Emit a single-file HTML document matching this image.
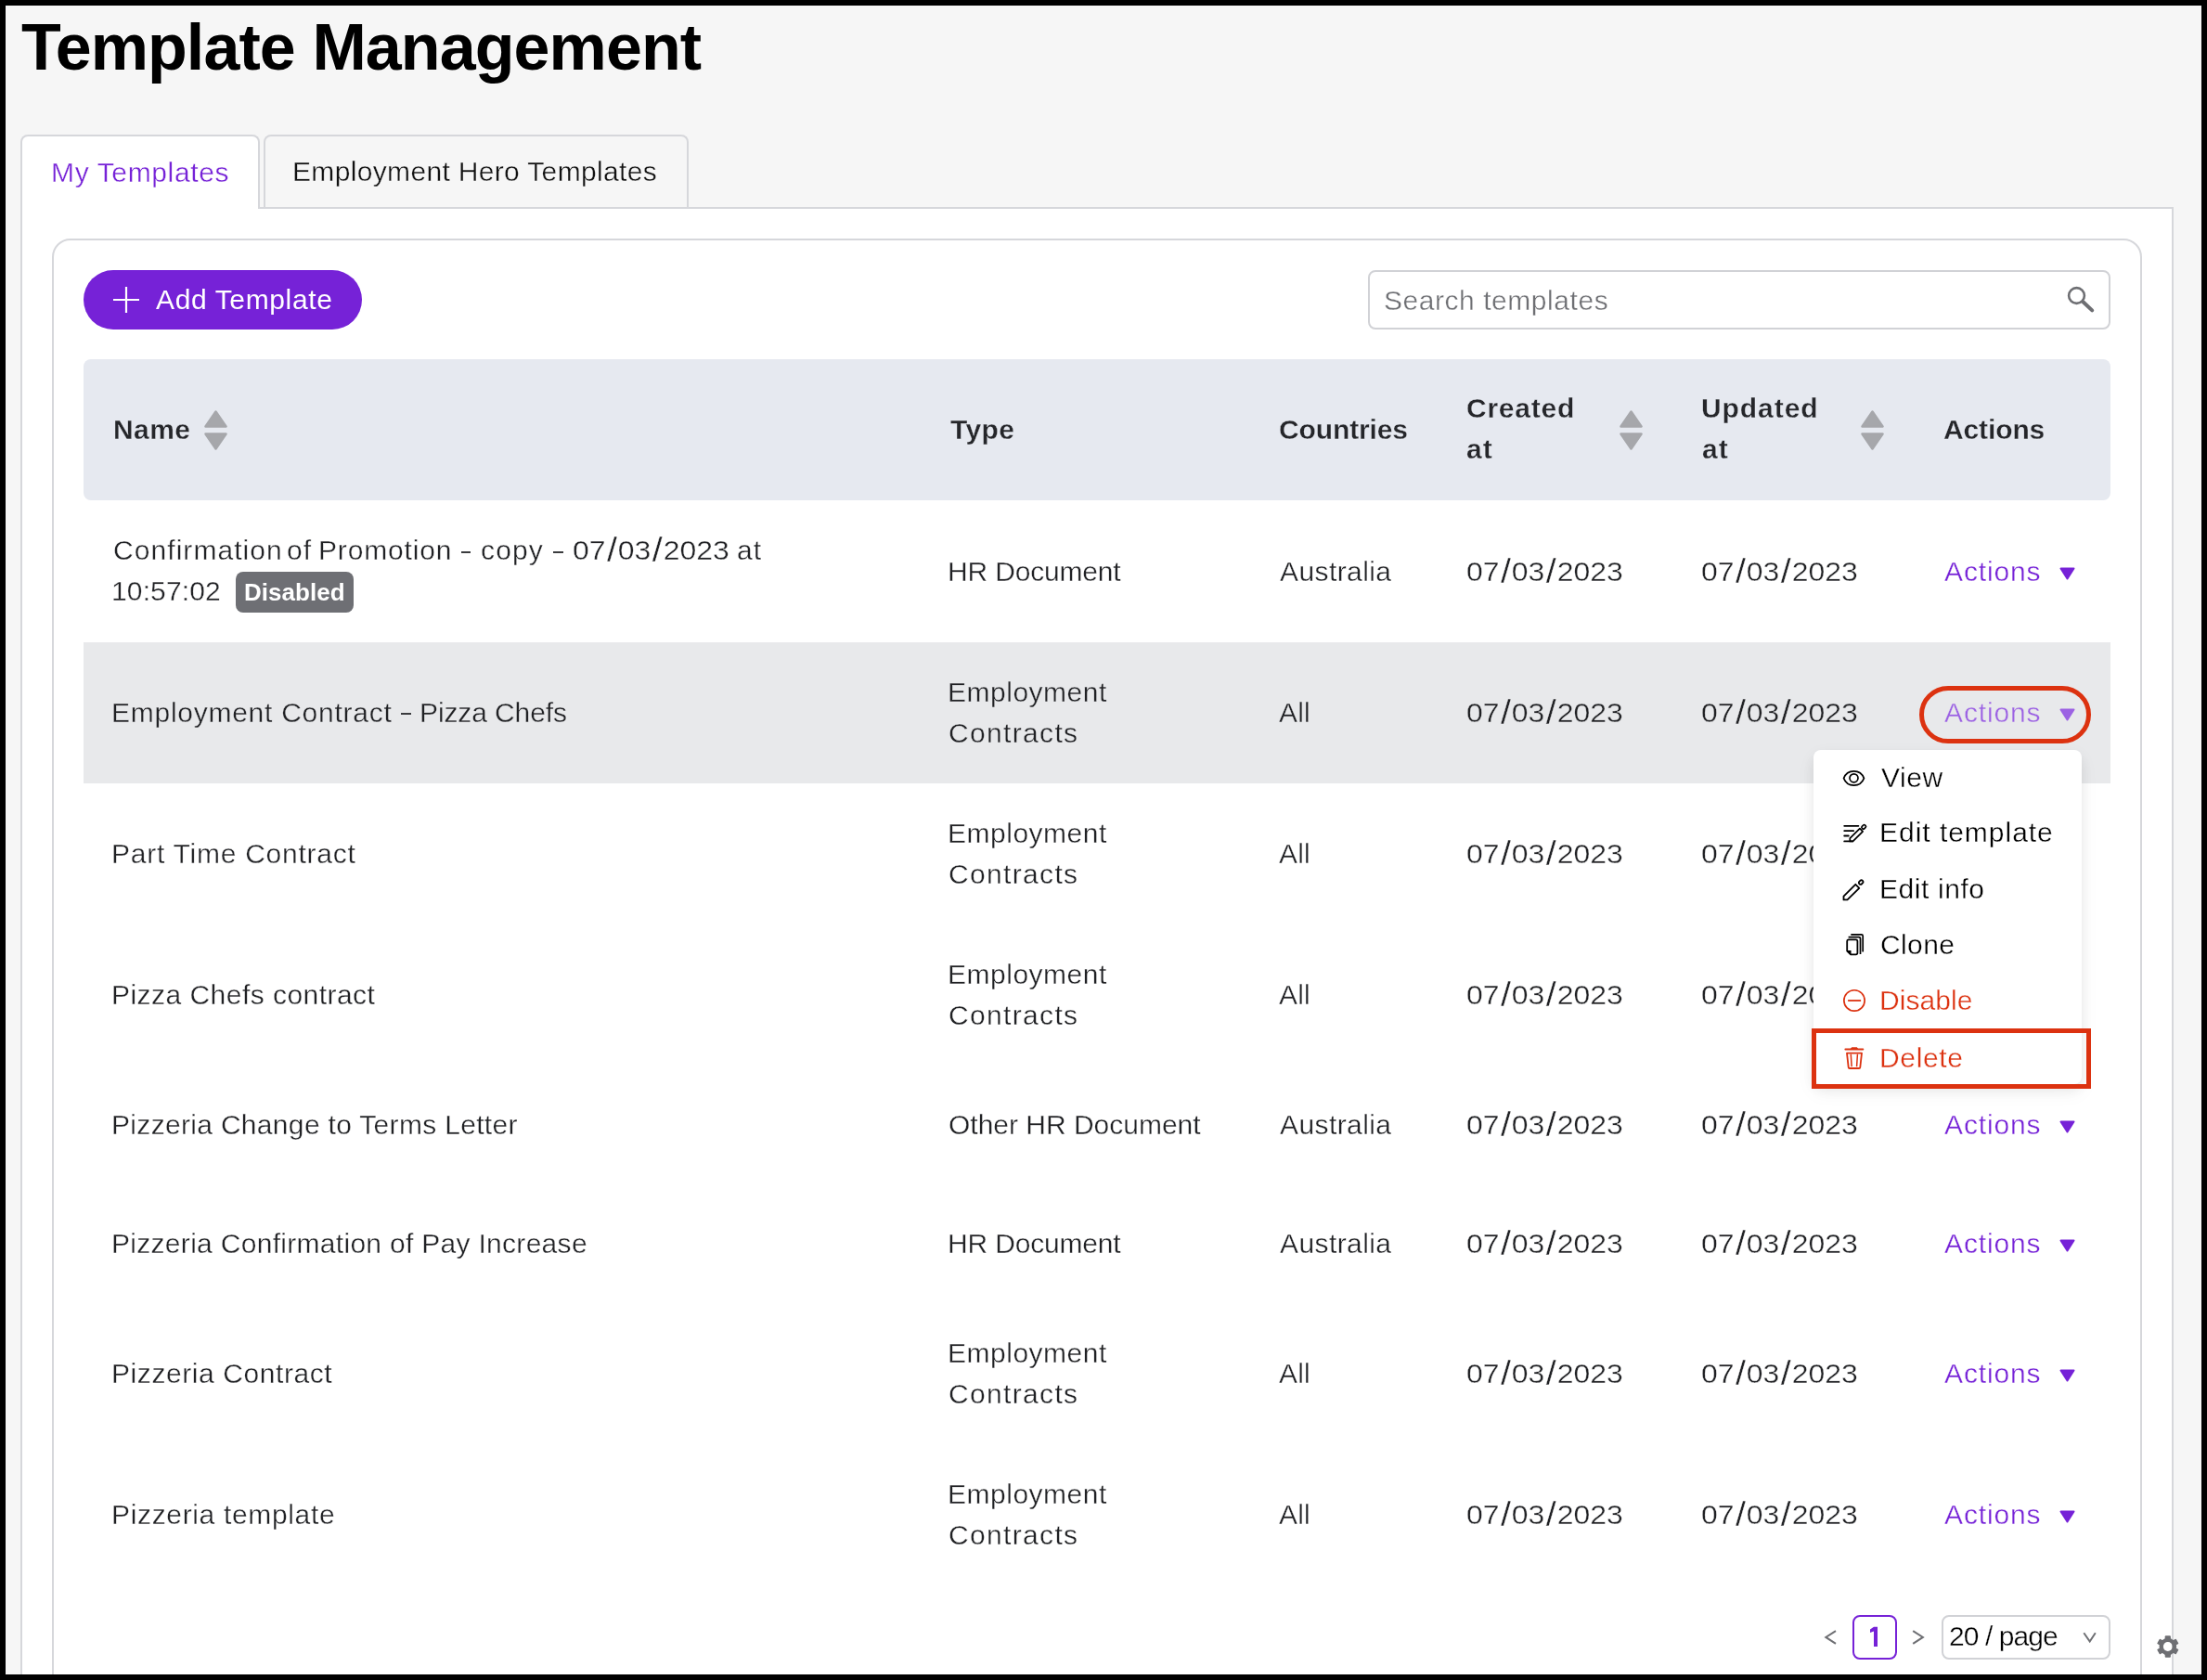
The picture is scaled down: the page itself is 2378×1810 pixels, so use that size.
<!DOCTYPE html>
<html><head><meta charset="utf-8"><style>
*{box-sizing:border-box;margin:0;padding:0}
html,body{width:2378px;height:1810px;overflow:hidden;background:#000;font-family:"Liberation Sans", sans-serif}
.abs{position:absolute}
.t{position:absolute;white-space:nowrap;will-change:transform}
.sl{font-size:37px;margin:0 0.9px 0 1.3px;vertical-align:-2px}
.dt{display:inline-block;transform:scaleX(1.065);transform-origin:0 0}
</style></head><body>

<div class="abs" style="left:6px;top:6px;width:2366px;height:1798px;overflow:hidden"><div class="abs" style="left:-6px;top:-6px;width:2378px;height:1810px">
<div class="abs" style="left:6px;top:6px;width:2366px;height:1798px;background:#f6f6f6"></div>
<div id="t0" class="t" style="left:23.00px;top:0.21px;font-size:70px;line-height:102.667px;font-weight:700;color:#000;letter-spacing:-0.906px">Template Management</div>
<div class="abs" style="left:22px;top:223px;width:2320px;height:1700px;background:#fff;border:2px solid #d6d7db"></div>
<div class="abs" style="left:22px;top:145px;width:258px;height:80px;background:#fff;border:2px solid #d6d7db;border-bottom:none;border-radius:8px 8px 0 0"></div>
<div class="abs" style="left:284px;top:145px;width:458px;height:78px;background:#f6f6f6;border:2px solid #d6d7db;border-bottom:none;border-radius:8px 8px 0 0"></div>
<div id="t1" class="t" style="left:54.60px;top:163.91px;font-size:30px;line-height:44.0px;font-weight:400;color:#7622d7;letter-spacing:0.636px;-webkit-text-stroke:0.35px #fff">My Templates</div>
<div id="t2" class="t" style="left:315.40px;top:162.80px;font-size:30px;line-height:44.0px;font-weight:400;color:#111;letter-spacing:0.337px;-webkit-text-stroke:0.35px #f6f6f6">Employment Hero Templates</div>
<div class="abs" style="left:56px;top:257px;width:2252px;height:1700px;background:#fff;border:2px solid #d6d7db;border-radius:20px"></div>
<div class="abs" style="left:90px;top:291px;width:300px;height:64px;background:#7622d7;border-radius:32px"></div>
<svg class="abs" style="left:122px;top:309px" width="28" height="28" viewBox="0 0 28 28"><path d="M14 0V28M0 14H28" stroke="#fff" stroke-width="2.2"/></svg>
<div id="t3" class="t" style="left:167.60px;top:301.41px;font-size:30px;line-height:44.0px;font-weight:400;color:#fff;letter-spacing:0.636px">Add Template</div>
<div class="abs" style="left:1474px;top:291px;width:800px;height:64px;background:#fff;border:2px solid #d1d2d6;border-radius:8px"></div>
<div id="t4" class="t" style="left:1491.00px;top:301.61px;font-size:30px;line-height:44.0px;font-weight:400;color:#6e6f73;letter-spacing:0.547px;-webkit-text-stroke:0.35px #fff">Search templates</div>
<svg class="abs" style="left:2224px;top:306px" width="36" height="34" viewBox="0 0 36 34"><circle cx="13.5" cy="12.5" r="8.4" fill="none" stroke="#6e6f73" stroke-width="2.6"/><path d="M20.5 19.3L30.2 28.4" stroke="#6e6f73" stroke-width="4" stroke-linecap="round"/></svg>
<div class="abs" style="left:90px;top:387px;width:2184px;height:152px;background:#e6e9f0;border-radius:8px"></div>
<div id="t5" class="t" style="left:121.80px;top:441.00px;font-size:30px;line-height:44.0px;font-weight:700;color:#25262a;letter-spacing:0.400px;-webkit-text-stroke:0.3px #e6e9f0">Name</div>
<div id="t6" class="t" style="left:1023.60px;top:440.81px;font-size:30px;line-height:44.0px;font-weight:700;color:#25262a;letter-spacing:0.400px;-webkit-text-stroke:0.3px #e6e9f0">Type</div>
<div id="t7" class="t" style="left:1377.80px;top:441.00px;font-size:30px;line-height:44.0px;font-weight:700;color:#25262a;letter-spacing:-0.125px;-webkit-text-stroke:0.3px #e6e9f0">Countries</div>
<div id="t8" class="t" style="left:1580.00px;top:418.21px;font-size:30px;line-height:44.0px;font-weight:700;color:#25262a;letter-spacing:0.767px;-webkit-text-stroke:0.3px #e6e9f0">Created</div>
<div id="t9" class="t" style="left:1580.00px;top:462.41px;font-size:30px;line-height:44.0px;font-weight:700;color:#25262a;letter-spacing:1.000px;-webkit-text-stroke:0.3px #e6e9f0">at</div>
<div id="t10" class="t" style="left:1832.60px;top:418.21px;font-size:30px;line-height:44.0px;font-weight:700;color:#25262a;letter-spacing:0.933px;-webkit-text-stroke:0.3px #e6e9f0">Updated</div>
<div id="t11" class="t" style="left:1833.60px;top:462.41px;font-size:30px;line-height:44.0px;font-weight:700;color:#25262a;letter-spacing:1.000px;-webkit-text-stroke:0.3px #e6e9f0">at</div>
<div id="t12" class="t" style="left:2093.80px;top:440.81px;font-size:30px;line-height:44.0px;font-weight:700;color:#25262a;letter-spacing:-0.117px;-webkit-text-stroke:0.3px #e6e9f0">Actions</div>
<svg class="abs" style="left:219.5px;top:441.5px" width="25" height="43" viewBox="0 0 25 43"><path d="M12.5 1.5L23.5 17.5H1.5Z" fill="#a6a7ab" stroke="#a6a7ab" stroke-width="2.5" stroke-linejoin="round"/><path d="M12.5 41.5L23.5 25.5H1.5Z" fill="#a6a7ab" stroke="#a6a7ab" stroke-width="2.5" stroke-linejoin="round"/></svg>
<svg class="abs" style="left:1745px;top:441.5px" width="25" height="43" viewBox="0 0 25 43"><path d="M12.5 1.5L23.5 17.5H1.5Z" fill="#a6a7ab" stroke="#a6a7ab" stroke-width="2.5" stroke-linejoin="round"/><path d="M12.5 41.5L23.5 25.5H1.5Z" fill="#a6a7ab" stroke="#a6a7ab" stroke-width="2.5" stroke-linejoin="round"/></svg>
<svg class="abs" style="left:2005px;top:441.5px" width="25" height="43" viewBox="0 0 25 43"><path d="M12.5 1.5L23.5 17.5H1.5Z" fill="#a6a7ab" stroke="#a6a7ab" stroke-width="2.5" stroke-linejoin="round"/><path d="M12.5 41.5L23.5 25.5H1.5Z" fill="#a6a7ab" stroke="#a6a7ab" stroke-width="2.5" stroke-linejoin="round"/></svg>
<div class="abs" style="left:90px;top:692px;width:2184px;height:152px;background:#e8e9eb"></div>
<div id="t13" class="t" style="left:121.80px;top:571.11px;font-size:30px;line-height:44.0px;font-weight:400;color:#202124;letter-spacing:1.064px;-webkit-text-stroke:0.35px #fff">Confirmation</div>
<div id="t14" class="t" style="left:309.20px;top:571.11px;font-size:30px;line-height:44.0px;font-weight:400;color:#202124;letter-spacing:1.000px;-webkit-text-stroke:0.35px #fff">of</div>
<div id="t15" class="t" style="left:343.40px;top:571.11px;font-size:30px;line-height:44.0px;font-weight:400;color:#202124;letter-spacing:0.825px;-webkit-text-stroke:0.35px #fff">Promotion</div>
<div id="t16" class="t" style="left:517.80px;top:571.11px;font-size:30px;line-height:44.0px;font-weight:400;color:#202124;letter-spacing:1.133px;-webkit-text-stroke:0.35px #fff">copy</div>
<div id="t17" class="t" style="left:616.80px;top:571.11px;font-size:30px;line-height:44.0px;font-weight:400;color:#202124;letter-spacing:0.000px;-webkit-text-stroke:0.35px #fff"><span class="dt">07<span class="sl">/</span>03<span class="sl">/</span>2023</span></div>
<div id="t18" class="t" style="left:793.80px;top:571.11px;font-size:30px;line-height:44.0px;font-weight:400;color:#202124;letter-spacing:1.000px;-webkit-text-stroke:0.35px #fff">at</div>
<div class="abs" style="left:496.5px;top:593.5px;width:10.3px;height:2px;background:#3a3b3e"></div>
<div class="abs" style="left:595.5px;top:593.5px;width:11.0px;height:2px;background:#3a3b3e"></div>
<div id="t19" class="t" style="left:120.20px;top:614.71px;font-size:30px;line-height:44.0px;font-weight:400;color:#202124;letter-spacing:0.129px;-webkit-text-stroke:0.35px #fff">10:57:02</div>
<div class="abs" style="left:254px;top:616px;width:127px;height:44px;background:#6e6f74;border-radius:8px"></div>
<div id="t20" class="t" style="left:263.00px;top:619.02px;font-size:26px;line-height:38.133px;font-weight:700;color:#fff;letter-spacing:0.029px">Disabled</div>
<div id="t21" class="t" style="left:1020.80px;top:593.81px;font-size:30px;line-height:44.0px;font-weight:400;color:#202124;letter-spacing:-0.170px;-webkit-text-stroke:0.35px #fff">HR Document</div>
<div id="t22" class="t" style="left:1378.60px;top:593.81px;font-size:30px;line-height:44.0px;font-weight:400;color:#202124;letter-spacing:0.412px;-webkit-text-stroke:0.35px #fff">Australia</div>
<div id="t23" class="t" style="left:1579.60px;top:593.81px;font-size:30px;line-height:44.0px;font-weight:400;color:#202124;letter-spacing:0.000px;-webkit-text-stroke:0.35px #fff"><span class="dt">07<span class="sl">/</span>03<span class="sl">/</span>2023</span></div>
<div id="t24" class="t" style="left:1833.20px;top:593.81px;font-size:30px;line-height:44.0px;font-weight:400;color:#202124;letter-spacing:0.000px;-webkit-text-stroke:0.35px #fff"><span class="dt">07<span class="sl">/</span>03<span class="sl">/</span>2023</span></div>
<div id="t25" class="t" style="left:2094.80px;top:593.81px;font-size:30px;line-height:44.0px;font-weight:400;color:#7622d7;letter-spacing:0.867px;-webkit-text-stroke:0.35px #fff">Actions</div>
<svg class="abs" style="left:2219px;top:610.7px" width="17" height="14" viewBox="0 0 17 14"><path d="M1.5 1.5H15.5L8.5 12.5Z" fill="#7622d7" stroke="#7622d7" stroke-width="2" stroke-linejoin="round"/></svg>
<div id="t26" class="t" style="left:119.60px;top:746.00px;font-size:30px;line-height:44.0px;font-weight:400;color:#202124;letter-spacing:0.739px;-webkit-text-stroke:0.35px #e8e9eb">Employment Contract</div>
<div class="abs" style="left:432.2px;top:768.4px;width:10.9px;height:2px;background:#3a3b3e"></div>
<div id="t27" class="t" style="left:451.60px;top:746.00px;font-size:30px;line-height:44.0px;font-weight:400;color:#202124;letter-spacing:-0.110px;-webkit-text-stroke:0.35px #e8e9eb">Pizza Chefs</div>
<div id="t28" class="t" style="left:1020.60px;top:724.00px;font-size:30px;line-height:44.0px;font-weight:400;color:#202124;letter-spacing:0.511px;-webkit-text-stroke:0.35px #e8e9eb">Employment</div>
<div id="t29" class="t" style="left:1021.60px;top:768.00px;font-size:30px;line-height:44.0px;font-weight:400;color:#202124;letter-spacing:1.338px;-webkit-text-stroke:0.35px #e8e9eb">Contracts</div>
<div id="t30" class="t" style="left:1377.80px;top:746.00px;font-size:30px;line-height:44.0px;font-weight:400;color:#202124;letter-spacing:0.200px;-webkit-text-stroke:0.35px #e8e9eb">All</div>
<div id="t31" class="t" style="left:1579.60px;top:746.00px;font-size:30px;line-height:44.0px;font-weight:400;color:#202124;letter-spacing:0.000px;-webkit-text-stroke:0.35px #e8e9eb"><span class="dt">07<span class="sl">/</span>03<span class="sl">/</span>2023</span></div>
<div id="t32" class="t" style="left:1833.20px;top:746.00px;font-size:30px;line-height:44.0px;font-weight:400;color:#202124;letter-spacing:0.000px;-webkit-text-stroke:0.35px #e8e9eb"><span class="dt">07<span class="sl">/</span>03<span class="sl">/</span>2023</span></div>
<div id="t33" class="t" style="left:2094.80px;top:746.00px;font-size:30px;line-height:44.0px;font-weight:400;color:#9c62e3;letter-spacing:0.867px;-webkit-text-stroke:0.35px #e8e9eb">Actions</div>
<svg class="abs" style="left:2219px;top:762.9px" width="17" height="14" viewBox="0 0 17 14"><path d="M1.5 1.5H15.5L8.5 12.5Z" fill="#9c62e3" stroke="#9c62e3" stroke-width="2" stroke-linejoin="round"/></svg>
<div id="t34" class="t" style="left:119.60px;top:898.00px;font-size:30px;line-height:44.0px;font-weight:400;color:#202124;letter-spacing:0.747px;-webkit-text-stroke:0.35px #fff">Part Time Contract</div>
<div id="t35" class="t" style="left:1020.60px;top:876.00px;font-size:30px;line-height:44.0px;font-weight:400;color:#202124;letter-spacing:0.511px;-webkit-text-stroke:0.35px #fff">Employment</div>
<div id="t36" class="t" style="left:1021.60px;top:920.00px;font-size:30px;line-height:44.0px;font-weight:400;color:#202124;letter-spacing:1.338px;-webkit-text-stroke:0.35px #fff">Contracts</div>
<div id="t37" class="t" style="left:1377.80px;top:898.00px;font-size:30px;line-height:44.0px;font-weight:400;color:#202124;letter-spacing:0.200px;-webkit-text-stroke:0.35px #fff">All</div>
<div id="t38" class="t" style="left:1579.60px;top:898.00px;font-size:30px;line-height:44.0px;font-weight:400;color:#202124;letter-spacing:0.000px;-webkit-text-stroke:0.35px #fff"><span class="dt">07<span class="sl">/</span>03<span class="sl">/</span>2023</span></div>
<div id="t39" class="t" style="left:1833.20px;top:898.00px;font-size:30px;line-height:44.0px;font-weight:400;color:#202124;letter-spacing:0.000px;-webkit-text-stroke:0.35px #fff"><span class="dt">07<span class="sl">/</span>03<span class="sl">/</span>2023</span></div>
<div id="t40" class="t" style="left:2094.80px;top:898.00px;font-size:30px;line-height:44.0px;font-weight:400;color:#7622d7;letter-spacing:0.867px;-webkit-text-stroke:0.35px #fff">Actions</div>
<svg class="abs" style="left:2219px;top:914.9px" width="17" height="14" viewBox="0 0 17 14"><path d="M1.5 1.5H15.5L8.5 12.5Z" fill="#7622d7" stroke="#7622d7" stroke-width="2" stroke-linejoin="round"/></svg>
<div id="t41" class="t" style="left:119.60px;top:1050.01px;font-size:30px;line-height:44.0px;font-weight:400;color:#202124;letter-spacing:0.463px;-webkit-text-stroke:0.35px #fff">Pizza Chefs contract</div>
<div id="t42" class="t" style="left:1020.60px;top:1028.01px;font-size:30px;line-height:44.0px;font-weight:400;color:#202124;letter-spacing:0.511px;-webkit-text-stroke:0.35px #fff">Employment</div>
<div id="t43" class="t" style="left:1021.60px;top:1072.01px;font-size:30px;line-height:44.0px;font-weight:400;color:#202124;letter-spacing:1.338px;-webkit-text-stroke:0.35px #fff">Contracts</div>
<div id="t44" class="t" style="left:1377.80px;top:1050.01px;font-size:30px;line-height:44.0px;font-weight:400;color:#202124;letter-spacing:0.200px;-webkit-text-stroke:0.35px #fff">All</div>
<div id="t45" class="t" style="left:1579.60px;top:1050.01px;font-size:30px;line-height:44.0px;font-weight:400;color:#202124;letter-spacing:0.000px;-webkit-text-stroke:0.35px #fff"><span class="dt">07<span class="sl">/</span>03<span class="sl">/</span>2023</span></div>
<div id="t46" class="t" style="left:1833.20px;top:1050.01px;font-size:30px;line-height:44.0px;font-weight:400;color:#202124;letter-spacing:0.000px;-webkit-text-stroke:0.35px #fff"><span class="dt">07<span class="sl">/</span>03<span class="sl">/</span>2023</span></div>
<div id="t47" class="t" style="left:2094.80px;top:1050.01px;font-size:30px;line-height:44.0px;font-weight:400;color:#7622d7;letter-spacing:0.867px;-webkit-text-stroke:0.35px #fff">Actions</div>
<svg class="abs" style="left:2219px;top:1066.9px" width="17" height="14" viewBox="0 0 17 14"><path d="M1.5 1.5H15.5L8.5 12.5Z" fill="#7622d7" stroke="#7622d7" stroke-width="2" stroke-linejoin="round"/></svg>
<div id="t48" class="t" style="left:119.60px;top:1190.01px;font-size:30px;line-height:44.0px;font-weight:400;color:#202124;letter-spacing:0.317px;-webkit-text-stroke:0.35px #fff">Pizzeria Change to Terms Letter</div>
<div id="t49" class="t" style="left:1021.80px;top:1190.01px;font-size:30px;line-height:44.0px;font-weight:400;color:#202124;letter-spacing:-0.012px;-webkit-text-stroke:0.35px #fff">Other HR Document</div>
<div id="t50" class="t" style="left:1378.60px;top:1190.01px;font-size:30px;line-height:44.0px;font-weight:400;color:#202124;letter-spacing:0.412px;-webkit-text-stroke:0.35px #fff">Australia</div>
<div id="t51" class="t" style="left:1579.60px;top:1190.01px;font-size:30px;line-height:44.0px;font-weight:400;color:#202124;letter-spacing:0.000px;-webkit-text-stroke:0.35px #fff"><span class="dt">07<span class="sl">/</span>03<span class="sl">/</span>2023</span></div>
<div id="t52" class="t" style="left:1833.20px;top:1190.01px;font-size:30px;line-height:44.0px;font-weight:400;color:#202124;letter-spacing:0.000px;-webkit-text-stroke:0.35px #fff"><span class="dt">07<span class="sl">/</span>03<span class="sl">/</span>2023</span></div>
<div id="t53" class="t" style="left:2094.80px;top:1190.01px;font-size:30px;line-height:44.0px;font-weight:400;color:#7622d7;letter-spacing:0.867px;-webkit-text-stroke:0.35px #fff">Actions</div>
<svg class="abs" style="left:2219px;top:1206.9px" width="17" height="14" viewBox="0 0 17 14"><path d="M1.5 1.5H15.5L8.5 12.5Z" fill="#7622d7" stroke="#7622d7" stroke-width="2" stroke-linejoin="round"/></svg>
<div id="t54" class="t" style="left:119.60px;top:1318.01px;font-size:30px;line-height:44.0px;font-weight:400;color:#202124;letter-spacing:0.297px;-webkit-text-stroke:0.35px #fff">Pizzeria Confirmation of Pay Increase</div>
<div id="t55" class="t" style="left:1020.80px;top:1318.01px;font-size:30px;line-height:44.0px;font-weight:400;color:#202124;letter-spacing:-0.170px;-webkit-text-stroke:0.35px #fff">HR Document</div>
<div id="t56" class="t" style="left:1378.60px;top:1318.01px;font-size:30px;line-height:44.0px;font-weight:400;color:#202124;letter-spacing:0.412px;-webkit-text-stroke:0.35px #fff">Australia</div>
<div id="t57" class="t" style="left:1579.60px;top:1318.01px;font-size:30px;line-height:44.0px;font-weight:400;color:#202124;letter-spacing:0.000px;-webkit-text-stroke:0.35px #fff"><span class="dt">07<span class="sl">/</span>03<span class="sl">/</span>2023</span></div>
<div id="t58" class="t" style="left:1833.20px;top:1318.01px;font-size:30px;line-height:44.0px;font-weight:400;color:#202124;letter-spacing:0.000px;-webkit-text-stroke:0.35px #fff"><span class="dt">07<span class="sl">/</span>03<span class="sl">/</span>2023</span></div>
<div id="t59" class="t" style="left:2094.80px;top:1318.01px;font-size:30px;line-height:44.0px;font-weight:400;color:#7622d7;letter-spacing:0.867px;-webkit-text-stroke:0.35px #fff">Actions</div>
<svg class="abs" style="left:2219px;top:1334.9px" width="17" height="14" viewBox="0 0 17 14"><path d="M1.5 1.5H15.5L8.5 12.5Z" fill="#7622d7" stroke="#7622d7" stroke-width="2" stroke-linejoin="round"/></svg>
<div id="t60" class="t" style="left:119.60px;top:1458.01px;font-size:30px;line-height:44.0px;font-weight:400;color:#202124;letter-spacing:0.581px;-webkit-text-stroke:0.35px #fff">Pizzeria Contract</div>
<div id="t61" class="t" style="left:1020.60px;top:1436.01px;font-size:30px;line-height:44.0px;font-weight:400;color:#202124;letter-spacing:0.511px;-webkit-text-stroke:0.35px #fff">Employment</div>
<div id="t62" class="t" style="left:1021.60px;top:1480.01px;font-size:30px;line-height:44.0px;font-weight:400;color:#202124;letter-spacing:1.338px;-webkit-text-stroke:0.35px #fff">Contracts</div>
<div id="t63" class="t" style="left:1377.80px;top:1458.01px;font-size:30px;line-height:44.0px;font-weight:400;color:#202124;letter-spacing:0.200px;-webkit-text-stroke:0.35px #fff">All</div>
<div id="t64" class="t" style="left:1579.60px;top:1458.01px;font-size:30px;line-height:44.0px;font-weight:400;color:#202124;letter-spacing:0.000px;-webkit-text-stroke:0.35px #fff"><span class="dt">07<span class="sl">/</span>03<span class="sl">/</span>2023</span></div>
<div id="t65" class="t" style="left:1833.20px;top:1458.01px;font-size:30px;line-height:44.0px;font-weight:400;color:#202124;letter-spacing:0.000px;-webkit-text-stroke:0.35px #fff"><span class="dt">07<span class="sl">/</span>03<span class="sl">/</span>2023</span></div>
<div id="t66" class="t" style="left:2094.80px;top:1458.01px;font-size:30px;line-height:44.0px;font-weight:400;color:#7622d7;letter-spacing:0.867px;-webkit-text-stroke:0.35px #fff">Actions</div>
<svg class="abs" style="left:2219px;top:1474.9px" width="17" height="14" viewBox="0 0 17 14"><path d="M1.5 1.5H15.5L8.5 12.5Z" fill="#7622d7" stroke="#7622d7" stroke-width="2" stroke-linejoin="round"/></svg>
<div id="t67" class="t" style="left:119.60px;top:1610.01px;font-size:30px;line-height:44.0px;font-weight:400;color:#202124;letter-spacing:0.656px;-webkit-text-stroke:0.35px #fff">Pizzeria template</div>
<div id="t68" class="t" style="left:1020.60px;top:1588.01px;font-size:30px;line-height:44.0px;font-weight:400;color:#202124;letter-spacing:0.511px;-webkit-text-stroke:0.35px #fff">Employment</div>
<div id="t69" class="t" style="left:1021.60px;top:1632.01px;font-size:30px;line-height:44.0px;font-weight:400;color:#202124;letter-spacing:1.338px;-webkit-text-stroke:0.35px #fff">Contracts</div>
<div id="t70" class="t" style="left:1377.80px;top:1610.01px;font-size:30px;line-height:44.0px;font-weight:400;color:#202124;letter-spacing:0.200px;-webkit-text-stroke:0.35px #fff">All</div>
<div id="t71" class="t" style="left:1579.60px;top:1610.01px;font-size:30px;line-height:44.0px;font-weight:400;color:#202124;letter-spacing:0.000px;-webkit-text-stroke:0.35px #fff"><span class="dt">07<span class="sl">/</span>03<span class="sl">/</span>2023</span></div>
<div id="t72" class="t" style="left:1833.20px;top:1610.01px;font-size:30px;line-height:44.0px;font-weight:400;color:#202124;letter-spacing:0.000px;-webkit-text-stroke:0.35px #fff"><span class="dt">07<span class="sl">/</span>03<span class="sl">/</span>2023</span></div>
<div id="t73" class="t" style="left:2094.80px;top:1610.01px;font-size:30px;line-height:44.0px;font-weight:400;color:#7622d7;letter-spacing:0.867px;-webkit-text-stroke:0.35px #fff">Actions</div>
<svg class="abs" style="left:2219px;top:1626.9px" width="17" height="14" viewBox="0 0 17 14"><path d="M1.5 1.5H15.5L8.5 12.5Z" fill="#7622d7" stroke="#7622d7" stroke-width="2" stroke-linejoin="round"/></svg>
<div class="abs" style="left:2068px;top:739px;width:185px;height:62px;border:5px solid #dc3210;border-radius:31px"></div>
<div class="abs" style="left:1954px;top:808px;width:289px;height:360px;background:#fff;border-radius:8px;box-shadow:0 6px 16px rgba(0,0,0,0.08),0 3px 6px -4px rgba(0,0,0,0.12),0 9px 20px 2px rgba(0,0,0,0.04)"></div>
<div id="t74" class="t" style="left:2026.60px;top:815.71px;font-size:30px;line-height:44.0px;font-weight:400;color:#000;letter-spacing:0.533px;-webkit-text-stroke:0.35px #fff">View</div>
<div id="t75" class="t" style="left:2024.60px;top:875.40px;font-size:30px;line-height:44.0px;font-weight:400;color:#000;letter-spacing:0.975px;-webkit-text-stroke:0.35px #fff">Edit template</div>
<div id="t76" class="t" style="left:2024.60px;top:935.71px;font-size:30px;line-height:44.0px;font-weight:400;color:#000;letter-spacing:0.575px;-webkit-text-stroke:0.35px #fff">Edit info</div>
<div id="t77" class="t" style="left:2025.60px;top:995.70px;font-size:30px;line-height:44.0px;font-weight:400;color:#000;letter-spacing:0.375px;-webkit-text-stroke:0.35px #fff">Clone</div>
<div id="t78" class="t" style="left:2024.60px;top:1055.70px;font-size:30px;line-height:44.0px;font-weight:400;color:#dc3210;letter-spacing:0.067px;-webkit-text-stroke:0.35px #fff">Disable</div>
<div id="t79" class="t" style="left:2024.60px;top:1117.61px;font-size:30px;line-height:44.0px;font-weight:400;color:#dc3210;letter-spacing:0.660px;-webkit-text-stroke:0.35px #fff">Delete</div>
<svg class="abs" style="left:1984px;top:828.5px" width="28" height="20" viewBox="0 0 28 20"><path d="M2.6 9.5C4.3 5 8.5 1.9 13.5 1.9S22.7 5 24.4 9.5C22.7 14 18.5 17.1 13.5 17.1S4.3 14 2.6 9.5Z" fill="none" stroke="#000" stroke-width="1.8"/><circle cx="13.5" cy="9.3" r="4.5" fill="none" stroke="#000" stroke-width="1.7"/></svg>
<svg class="abs" style="left:1984.8px;top:886px" width="28" height="26" viewBox="0 0 28 26"><path d="M2.2 3.8H17.4M2.2 9.1H12.2M2.2 14.5H6.8M2.2 20.4H11" stroke="#000" stroke-width="1.8" stroke-linecap="round"/><path d="M8.3 20.4V17.2L18.9 6.6L22.1 9.8L11.5 20.4Z" fill="none" stroke="#000" stroke-width="1.7" stroke-linejoin="round"/><rect x="-2.3" y="-1.7" width="4.6" height="3.4" rx="1.3" transform="translate(23.2 4.9) rotate(-45)" fill="none" stroke="#000" stroke-width="1.7"/></svg>
<svg class="abs" style="left:1984px;top:944px" width="28" height="28" viewBox="0 0 28 28"><path d="M2.5 21.6L15.3 8.8L19.3 12.8L6.5 25.4H2.5Z" fill="none" stroke="#000" stroke-width="1.8" stroke-linejoin="round"/><rect x="-2.4" y="-1.8" width="4.8" height="3.6" rx="1.5" transform="translate(21.2 6.6) rotate(-45)" fill="none" stroke="#000" stroke-width="1.8"/></svg>
<svg class="abs" style="left:1986px;top:1004px" width="26" height="28" viewBox="0 0 26 28"><path d="M8.3 2.9H19.6A1.6 1.6 0 0 1 21.2 4.5V21.6" fill="none" stroke="#000" stroke-width="1.7"/><path d="M5.6 5.7H16.9A1.6 1.6 0 0 1 18.5 7.3V24" fill="none" stroke="#000" stroke-width="1.7"/><path d="M5.6 8.4H13.8A1.6 1.6 0 0 1 15.4 10V22.8A1.6 1.6 0 0 1 13.8 24.4H8.1L4.2 20.5V10A1.6 1.6 0 0 1 5.6 8.4Z" fill="none" stroke="#000" stroke-width="1.8" stroke-linejoin="round"/><path d="M4.2 20.1H8.5V24.4Z" fill="#000"/></svg>
<svg class="abs" style="left:1984px;top:1064px" width="28" height="28" viewBox="0 0 28 28"><circle cx="14" cy="13.9" r="11.15" fill="none" stroke="#dc3210" stroke-width="1.7"/><path d="M7.1 14H21.1" stroke="#dc3210" stroke-width="1.8"/></svg>
<svg class="abs" style="left:1984px;top:1125px" width="28" height="30" viewBox="0 0 28 30"><path d="M4.4 5.6H23.3" stroke="#dc3210" stroke-width="2" stroke-linecap="round"/><path d="M9.6 5.2L11.2 3.3H16.8L18.4 5.2Z" fill="#dc3210"/><path d="M6 9.6H22L20.3 24.9Q20.2 26 19 26H9Q7.8 26 7.7 24.9Z" fill="none" stroke="#dc3210" stroke-width="1.8" stroke-linejoin="round"/><path d="M10.3 11.3L11.1 23.6M17.4 11.3L16.6 23.6" stroke="#dc3210" stroke-width="1.5" stroke-linecap="round"/></svg>
<div class="abs" style="left:1952px;top:1108px;width:301px;height:65px;border:5.5px solid #dc3210"></div>
<svg class="abs" style="left:1963px;top:1754px" width="20" height="20" viewBox="0 0 20 20"><path d="M15 3.1L4.3 9.9L15 16.9" fill="none" stroke="#6e6f73" stroke-width="2"/></svg>
<div class="abs" style="left:1996px;top:1740px;width:48px;height:48px;border:2px solid #7622d7;border-radius:8px;background:#fff"></div>
<svg class="abs" style="left:2012px;top:1751px" width="14" height="26" viewBox="0 0 14 26"><path d="M7 1.8H11V22.9H7V6.6L3 8V4.6Z" fill="#7622d7"/></svg>
<svg class="abs" style="left:2057px;top:1754px" width="20" height="20" viewBox="0 0 20 20"><path d="M4.2 3.1L14.9 9.9L4.2 16.9" fill="none" stroke="#6e6f73" stroke-width="2"/></svg>
<div class="abs" style="left:2092px;top:1740px;width:182px;height:48px;border:2px solid #d1d2d6;border-radius:8px;background:#fff"></div>
<div id="t80" class="t" style="left:2100.00px;top:1740.61px;font-size:30px;line-height:44.0px;font-weight:400;color:#000;letter-spacing:-0.913px;-webkit-text-stroke:0.35px #fff">20 / page</div>
<svg class="abs" style="left:2242px;top:1754px" width="20" height="18" viewBox="0 0 20 18"><path d="M3.3 5.2L9.7 14.5L15.8 5.2" fill="none" stroke="#6e6f73" stroke-width="2"/></svg>
<svg class="abs" style="left:2322px;top:1760px" width="28" height="28" viewBox="0 0 28 28"><defs><mask id="gm"><rect width="28" height="28" fill="#fff"/><circle cx="13.8" cy="14" r="4.9" fill="#000"/></mask></defs><g fill="#6e6f73" mask="url(#gm)"><circle cx="13.8" cy="14" r="9.3"/><rect x="10.7" y="2.2" width="6.2" height="23.6" rx="1"/><rect x="10.7" y="2.2" width="6.2" height="23.6" rx="1" transform="rotate(60 13.8 14)"/><rect x="10.7" y="2.2" width="6.2" height="23.6" rx="1" transform="rotate(-60 13.8 14)"/></g></svg>
</div></div></body></html>
